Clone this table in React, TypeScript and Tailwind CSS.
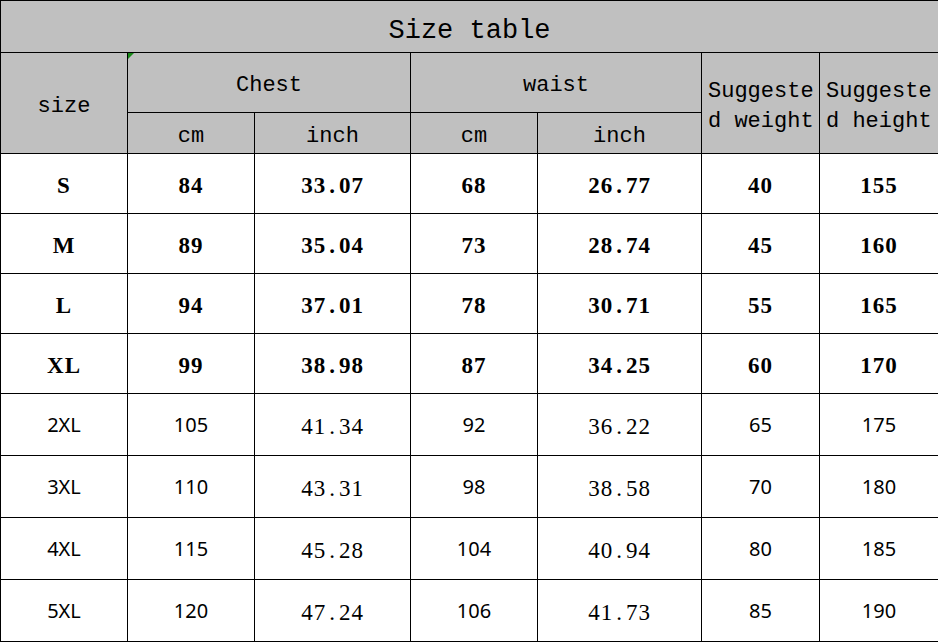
import React from "react";

type Row = {
  size: string;
  chestCm: string;
  chestIn: string;
  waistCm: string;
  waistIn: string;
  weight: string;
  height: string;
  // first four rows are set in a bold serif, the rest in a plain sans
  serif: boolean;
};

const rows: Row[] = [
  { size: "S", chestCm: "84", chestIn: "33.07", waistCm: "68", waistIn: "26.77", weight: "40", height: "155", serif: true },
  { size: "M", chestCm: "89", chestIn: "35.04", waistCm: "73", waistIn: "28.74", weight: "45", height: "160", serif: true },
  { size: "L", chestCm: "94", chestIn: "37.01", waistCm: "78", waistIn: "30.71", weight: "55", height: "165", serif: true },
  { size: "XL", chestCm: "99", chestIn: "38.98", waistCm: "87", waistIn: "34.25", weight: "60", height: "170", serif: true },
  { size: "2XL", chestCm: "105", chestIn: "41.34", waistCm: "92", waistIn: "36.22", weight: "65", height: "175", serif: false },
  { size: "3XL", chestCm: "110", chestIn: "43.31", waistCm: "98", waistIn: "38.58", weight: "70", height: "180", serif: false },
  { size: "4XL", chestCm: "115", chestIn: "45.28", waistCm: "104", waistIn: "40.94", weight: "80", height: "185", serif: false },
  { size: "5XL", chestCm: "120", chestIn: "47.24", waistCm: "106", waistIn: "41.73", weight: "85", height: "190", serif: false },
];

const mono = "font-['Liberation_Mono',monospace]";
const serif = "font-['Liberation_Serif',serif]";
const sans = "font-['Noto_Sans',sans-serif]";

const th = `border border-black bg-[#c0c0c0] text-center align-middle text-[22px] leading-[30px] text-black font-normal ${mono}`;
const td = "border border-black bg-white text-center align-middle text-black p-0";

// decimal numbers have a wide full-width period in the original
function Decimal({ value, bold }: { value: string; bold?: boolean }) {
  const [a, b] = value.split(".");
  return (
    <span className={`${serif} text-[23px] tracking-[1px] ${bold ? "font-bold" : "font-normal"}`}>
      {a}
      <span className="mx-[3px]">.</span>
      {b}
    </span>
  );
}

function Plain({ value, isSerif }: { value: string; isSerif: boolean }) {
  if (isSerif) {
    return <span className={`${serif} text-[23px] font-bold tracking-[1px]`}>{value}</span>;
  }
  return <span className={`${sans} text-[20px] font-normal`}>{value}</span>;
}

export default function App() {
  return (
    <div className="w-[938px] h-[642px] bg-white">
      <table className="table-fixed border-collapse w-[938px]">
        <colgroup>
          <col className="w-[127px]" />
          <col className="w-[127px]" />
          <col className="w-[156px]" />
          <col className="w-[127px]" />
          <col className="w-[164px]" />
          <col className="w-[118px]" />
          <col className="w-[119px]" />
        </colgroup>
        <thead>
          <tr className="h-[52px]">
            <th colSpan={7} className={`${th} text-[27px] pt-[8px]`}>
              Size table
            </th>
          </tr>
          <tr className="h-[60px]">
            <th rowSpan={2} className={`${th} pt-[8px]`}>
              size
            </th>
            <th colSpan={2} className={`${th} relative pt-[6px]`}>
              <span className="absolute left-0 top-0 w-0 h-0 border-t-[6px] border-r-[6px] border-t-[#1a8a1a] border-r-transparent" />
              Chest
            </th>
            <th colSpan={2} className={`${th} pt-[6px]`}>
              waist
            </th>
            <th rowSpan={2} className={`${th} text-left pl-[6px] pt-[8px]`}>
              Suggeste
              <br />d weight
            </th>
            <th rowSpan={2} className={`${th} text-left pl-[6px] pt-[8px]`}>
              Suggeste
              <br />d height
            </th>
          </tr>
          <tr className="h-[41px]">
            <th className={`${th} pt-[8px]`}>cm</th>
            <th className={`${th} pt-[8px]`}>inch</th>
            <th className={`${th} pt-[8px]`}>cm</th>
            <th className={`${th} pt-[8px]`}>inch</th>
          </tr>
        </thead>
        <tbody>
          {rows.map((r) => (
            <tr key={r.size} className={r.serif ? "h-[60px]" : "h-[62px]"}>
              <td className={`${td} ${r.serif ? "pt-[6px]" : "pt-0"}`}>
                <Plain value={r.size} isSerif={r.serif} />
              </td>
              <td className={`${td} ${r.serif ? "pt-[6px]" : "pt-0"}`}>
                <Plain value={r.chestCm} isSerif={r.serif} />
              </td>
              <td className={`${td} pt-[6px]`}>
                <Decimal value={r.chestIn} bold={r.serif} />
              </td>
              <td className={`${td} ${r.serif ? "pt-[6px]" : "pt-0"}`}>
                <Plain value={r.waistCm} isSerif={r.serif} />
              </td>
              <td className={`${td} pt-[6px]`}>
                <Decimal value={r.waistIn} bold={r.serif} />
              </td>
              <td className={`${td} ${r.serif ? "pt-[6px]" : "pt-0"}`}>
                <Plain value={r.weight} isSerif={r.serif} />
              </td>
              <td className={`${td} ${r.serif ? "pt-[6px]" : "pt-0"}`}>
                <Plain value={r.height} isSerif={r.serif} />
              </td>
            </tr>
          ))}
        </tbody>
      </table>
    </div>
  );
}
